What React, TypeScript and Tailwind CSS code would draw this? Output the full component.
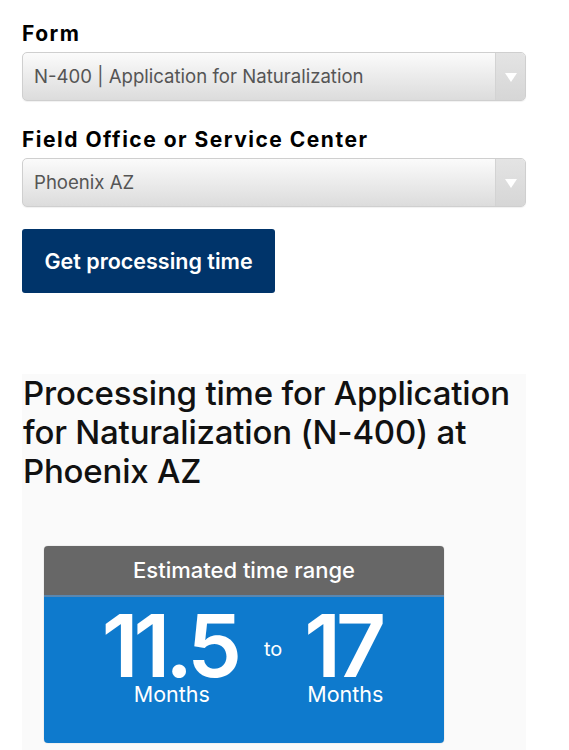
import React from "react";

function Select({ value }: { value: string }) {
  return (
    <div className="flex h-[49px] w-[504px] rounded-[5px] border border-[#cfcfcf] bg-linear-to-b from-[#fbfbfb] to-[#dcdcdc] shadow-[0_1px_1px_rgba(0,0,0,0.06)] overflow-hidden">
      <div className="flex-1 flex items-center pl-[11px] text-[18.6px] text-[#555555] leading-none">
        {value}
      </div>
      <div className="w-[30px] border-l border-[#d3d3d3] bg-linear-to-b from-[#e4e4e4] to-[#d6d6d6] flex items-center justify-center">
        <svg width="12" height="10" viewBox="0 0 12 10">
          <polygon points="0,1 12,1 6,10" fill="#ffffff" />
        </svg>
      </div>
    </div>
  );
}

export default function App() {
  return (
    <div className="w-[569px] h-[750px] overflow-hidden bg-white font-['Inter',sans-serif] text-black">
      <div className="pl-[22px] pt-[22px]">
        <div className="text-[21px] font-bold tracking-[1.5px] leading-[24px] mb-[6px]">Form</div>
        <Select value="N-400 | Application for Naturalization" />
        <div className="text-[21px] font-bold tracking-[1.5px] leading-[24px] mt-[27px] mb-[6px]">
          Field Office or Service Center
        </div>
        <Select value="Phoenix AZ" />
        <button className="mt-[22px] h-[64px] w-[253px] rounded-[3px] bg-[#00346a] text-white text-[21.5px] font-semibold flex items-center justify-center">
          Get processing time
        </button>
        <div className="mt-[81px] w-[504px] h-[400px] bg-[#fafafa]">
          <h1 className="text-[33px] leading-[39px] font-medium pl-[1px] tracking-[-0.2px] text-[#111111]">
            Processing time for Application for Naturalization (N-400) at Phoenix AZ
          </h1>
          <div className="ml-[22px] mt-[55px] w-[400px] rounded-[4px] overflow-hidden shadow-[0_0_1px_rgba(0,0,0,0.4)]">
            <div className="h-[51px] bg-[#676767] text-white text-[22px] font-medium flex items-center justify-center border-b-2 border-[#5a87b0]">
              Estimated time range
            </div>
            <div className="h-[146px] bg-[#0e7acd] text-white flex justify-center pt-[14px]">
              <div className="flex flex-col items-center">
                <div className="text-[87px] font-semibold leading-[70px] tracking-[-5px] pr-[5px]">11.5</div>
                <div className="text-[21.5px] leading-[22px] font-normal mt-[2px]">Months</div>
              </div>
              <div className="text-[20px] mx-[22px] mt-[28px] leading-none">to</div>
              <div className="flex flex-col items-center">
                <div className="text-[87px] font-semibold leading-[70px] tracking-[-5px] pr-[5px]">17</div>
                <div className="text-[21.5px] leading-[22px] font-normal mt-[2px]">Months</div>
              </div>
            </div>
          </div>
        </div>
      </div>
    </div>
  );
}
